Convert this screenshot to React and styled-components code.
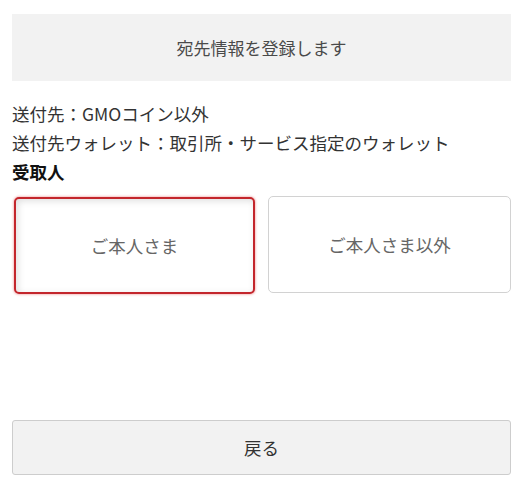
import React from "react";
import styled, { createGlobalStyle } from "styled-components";

const Global = createGlobalStyle`
  html, body { margin: 0; padding: 0; background: #fff; }
  body {
    font-family: "Noto Sans CJK JP", "Noto Sans", sans-serif;
    color: #333;
  }
`;

const Page = styled.div`
  width: 523px;
  height: 488px;
  box-sizing: border-box;
  padding: 14px 12px 0 12px;
  display: flex;
  flex-direction: column;
`;

const Heading = styled.div`
  height: 67px;
  background: #f2f2f2;
  display: flex;
  align-items: center;
  justify-content: center;
  font-size: 17px;
  color: #4a4a4a;
`;

const Info = styled.div`
  margin-top: 18px;
  display: flex;
  flex-direction: column;
`;

const Line = styled.div`
  font-size: 17.5px;
  line-height: 29px;
  height: 29px;
  white-space: nowrap;
  font-weight: ${(p) => (p.$bold ? 700 : 400)};
  color: ${(p) => (p.$bold ? "#111" : "#333")};
`;

const Choices = styled.div`
  margin-top: 10px;
  display: grid;
  grid-template-columns: 1fr 1fr;
  column-gap: 13px;
`;

const Choice = styled.button`
  height: 97px;
  box-sizing: border-box;
  background: #fff;
  font-family: inherit;
  font-size: 17.5px;
  color: #666;
  border-radius: 5px;
  cursor: pointer;
  border: ${(p) => (p.$selected ? "2px solid #c3262c" : "1px solid #d2d2d2")};
  box-shadow: ${(p) =>
    p.$selected
      ? "0 0 2px 1px rgba(225, 60, 60, 0.3), inset 2px 2px 7px rgba(0, 0, 0, 0.13)"
      : "none"};
  margin-left: ${(p) => (p.$selected ? "2px" : "0")};
  margin-top: ${(p) => (p.$selected ? "1px" : "0")};
`;

const Back = styled.button`
  margin-top: auto;
  margin-bottom: 13px;
  height: 55px;
  box-sizing: border-box;
  background: #f2f2f2;
  border: 1px solid #cdcdcd;
  border-radius: 3px;
  font-family: inherit;
  font-size: 17.5px;
  color: #333;
  cursor: pointer;
`;

export default function App() {
  return (
    <>
      <Global />
      <Page>
        <Heading>宛先情報を登録します</Heading>
        <Info>
          <Line>送付先：GMOコイン以外</Line>
          <Line>送付先ウォレット：取引所・サービス指定のウォレット</Line>
          <Line $bold>受取人</Line>
        </Info>
        <Choices>
          <Choice $selected>ご本人さま</Choice>
          <Choice>ご本人さま以外</Choice>
        </Choices>
        <Back>戻る</Back>
      </Page>
    </>
  );
}
